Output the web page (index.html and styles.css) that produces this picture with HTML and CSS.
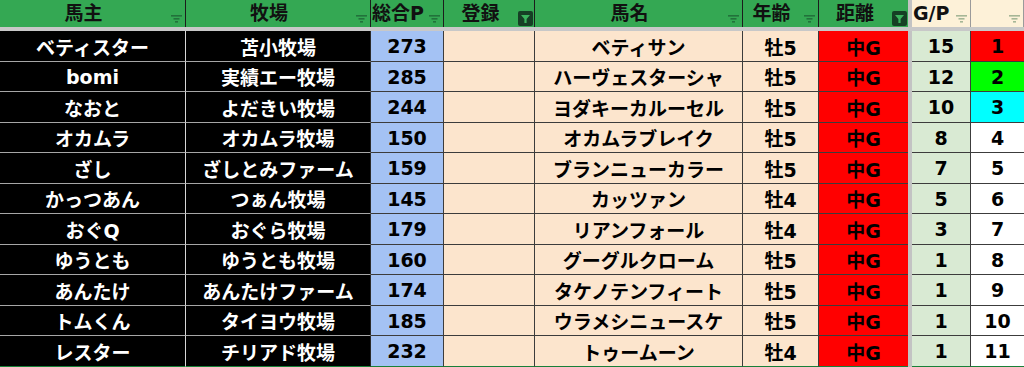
FILE: index.html
```html
<!DOCTYPE html>
<html lang="ja">
<head>
<meta charset="utf-8">
<title>馬主一覧</title>
<link rel="stylesheet" href="styles.css">
</head>
<body>
<div class="sheet">
  <div class="freeze-col"></div>
  <div class="freeze-row"></div>

  <div class="hd"><span class="lbl">馬主</span><span class="fi"><svg width="11" height="8" viewBox="0 0 11 8"><rect x="0" y="0" width="11" height="1.6"/><rect x="2.5" y="3" width="6" height="1.6"/><rect x="4" y="6" width="3" height="1.6"/></svg></span></div>
  <div class="hd"><span class="lbl">牧場</span><span class="fi"><svg width="11" height="8" viewBox="0 0 11 8"><rect x="0" y="0" width="11" height="1.6"/><rect x="2.5" y="3" width="6" height="1.6"/><rect x="4" y="6" width="3" height="1.6"/></svg></span></div>
  <div class="hd"><span class="lbl">総合P</span><span class="fi"><svg width="11" height="8" viewBox="0 0 11 8"><rect x="0" y="0" width="11" height="1.6"/><rect x="2.5" y="3" width="6" height="1.6"/><rect x="4" y="6" width="3" height="1.6"/></svg></span></div>
  <div class="hd"><span class="lbl">登録</span><span class="fa"><svg width="15" height="15" viewBox="0 0 15 15"><rect x="0" y="0" width="15" height="15" rx="2" class="sq"/><path d="M3 4 H12 L8.6 8 V12 H6.4 V8 Z" class="fn"/></svg></span></div>
  <div class="hd"><span class="lbl">馬名</span><span class="fi"><svg width="11" height="8" viewBox="0 0 11 8"><rect x="0" y="0" width="11" height="1.6"/><rect x="2.5" y="3" width="6" height="1.6"/><rect x="4" y="6" width="3" height="1.6"/></svg></span></div>
  <div class="hd"><span class="lbl">年齢</span><span class="fi"><svg width="11" height="8" viewBox="0 0 11 8"><rect x="0" y="0" width="11" height="1.6"/><rect x="2.5" y="3" width="6" height="1.6"/><rect x="4" y="6" width="3" height="1.6"/></svg></span></div>
  <div class="hd hd-last"><span class="lbl">距離</span><span class="fa"><svg width="15" height="15" viewBox="0 0 15 15"><rect x="0" y="0" width="15" height="15" rx="2" class="sq"/><path d="M3 4 H12 L8.6 8 V12 H6.4 V8 Z" class="fn"/></svg></span></div>
  <div class="hd hd-cream hd-left"><span class="lbl">G/P</span><span class="fi"><svg width="11" height="8" viewBox="0 0 11 8"><rect x="0" y="0" width="11" height="1.6"/><rect x="2.5" y="3" width="6" height="1.6"/><rect x="4" y="6" width="3" height="1.6"/></svg></span></div>
  <div class="hd hd-cream"><span class="lbl"></span><span class="fi"><svg width="11" height="8" viewBox="0 0 11 8"><rect x="0" y="0" width="11" height="1.6"/><rect x="2.5" y="3" width="6" height="1.6"/><rect x="4" y="6" width="3" height="1.6"/></svg></span></div>

  <div class="c owner">ベティスター</div><div class="c farm">苫小牧場</div><div class="c pts">273</div><div class="c reg"></div><div class="c name">ベティサン</div><div class="c age">牡5</div><div class="c dist">中G</div><div class="c gp">15</div><div class="c rank r1">1</div>
  <div class="c owner">bomi</div><div class="c farm">実績エー牧場</div><div class="c pts">285</div><div class="c reg"></div><div class="c name">ハーヴェスターシャ</div><div class="c age">牡5</div><div class="c dist">中G</div><div class="c gp">12</div><div class="c rank r2">2</div>
  <div class="c owner">なおと</div><div class="c farm">よだきい牧場</div><div class="c pts">244</div><div class="c reg"></div><div class="c name">ヨダキーカルーセル</div><div class="c age">牡5</div><div class="c dist">中G</div><div class="c gp">10</div><div class="c rank r3">3</div>
  <div class="c owner">オカムラ</div><div class="c farm">オカムラ牧場</div><div class="c pts">150</div><div class="c reg"></div><div class="c name">オカムラブレイク</div><div class="c age">牡5</div><div class="c dist">中G</div><div class="c gp">8</div><div class="c rank">4</div>
  <div class="c owner">ざし</div><div class="c farm">ざしとみファーム</div><div class="c pts">159</div><div class="c reg"></div><div class="c name">ブランニューカラー</div><div class="c age">牡5</div><div class="c dist">中G</div><div class="c gp">7</div><div class="c rank">5</div>
  <div class="c owner">かっつあん</div><div class="c farm">つぁん牧場</div><div class="c pts">145</div><div class="c reg"></div><div class="c name">カッツァン</div><div class="c age">牡4</div><div class="c dist">中G</div><div class="c gp">5</div><div class="c rank">6</div>
  <div class="c owner">おぐQ</div><div class="c farm">おぐら牧場</div><div class="c pts">179</div><div class="c reg"></div><div class="c name">リアンフォール</div><div class="c age">牡4</div><div class="c dist">中G</div><div class="c gp">3</div><div class="c rank">7</div>
  <div class="c owner">ゆうとも</div><div class="c farm">ゆうとも牧場</div><div class="c pts">160</div><div class="c reg"></div><div class="c name">グーグルクローム</div><div class="c age">牡5</div><div class="c dist">中G</div><div class="c gp">1</div><div class="c rank">8</div>
  <div class="c owner">あんたけ</div><div class="c farm">あんたけファーム</div><div class="c pts">174</div><div class="c reg"></div><div class="c name">タケノテンフィート</div><div class="c age">牡5</div><div class="c dist">中G</div><div class="c gp">1</div><div class="c rank">9</div>
  <div class="c owner">トムくん</div><div class="c farm">タイヨウ牧場</div><div class="c pts">185</div><div class="c reg"></div><div class="c name">ウラメシニュースケ</div><div class="c age">牡5</div><div class="c dist">中G</div><div class="c gp">1</div><div class="c rank">10</div>
  <div class="c owner last">レスター</div><div class="c farm last">チリアド牧場</div><div class="c pts last">232</div><div class="c reg last"></div><div class="c name last">トゥームーン</div><div class="c age last">牡4</div><div class="c dist last">中G</div><div class="c gp last">1</div><div class="c rank last">11</div>
</div>
</body>
</html>
```

FILE: styles.css
```css
html, body {
  margin: 0;
  padding: 0;
  background: #ffffff;
  overflow: hidden;
}

.sheet {
  display: grid;
  grid-template-columns: 186px 185px 73px 91px 208px 76px 89px 4px 59px 53px;
  grid-template-rows: 27px 4px 31px 30px 31px 30px 31px 30px 31px 30px 31px 30px 31px;
  width: 1024px;
  height: 367px;
  font-family: "DejaVu Sans", "Noto Sans CJK JP", sans-serif;
  font-weight: bold;
  font-size: 19px;
}

.freeze-col {
  grid-column: 8;
  grid-row: 1 / -1;
  background: #c3c3c3;
}

.freeze-row {
  grid-column: 1 / -1;
  grid-row: 2;
  background: #c8c8c8;
}

/* header */
.hd {
  box-sizing: border-box;
  display: flex;
  align-items: center;
  background: #34a853;
  color: #111111;
  border-right: 1px solid #1c1c1c;
  min-width: 0;
}

.hd-last {
  border-right: none;
}

.hd-cream {
  background: #fdf1d8;
  border-right: 1px solid #9a9a9a;
}

.lbl {
  flex: 1;
  text-align: center;
  white-space: nowrap;
  line-height: 27px;
}

.hd-left .lbl {
  text-align: left;
  padding-left: 1px;
}

.fi {
  width: 18px;
  align-self: flex-end;
  display: flex;
  justify-content: flex-end;
  padding-right: 3px;
  margin-bottom: 4px;
  box-sizing: border-box;
}

.fi svg {
  display: block;
  fill: rgba(20, 70, 40, 0.55);
}

.hd-cream .fi svg {
  fill: rgba(60, 110, 70, 0.45);
}

.fa {
  width: 17px;
  align-self: flex-end;
  display: flex;
  justify-content: flex-end;
  padding-right: 1px;
  margin-bottom: 1px;
  box-sizing: border-box;
}

.fa svg {
  display: block;
}

.fa .sq {
  fill: #163f25;
}

.fa .fn {
  fill: #3bb35d;
}

/* body cells */
.c {
  box-sizing: border-box;
  display: flex;
  align-items: center;
  justify-content: center;
  white-space: nowrap;
  color: #000000;
  border-right: 1px solid #3c3c3c;
  border-bottom: 1px solid #3c3c3c;
  min-width: 0;
}

.owner {
  background: #000000;
  color: #ffffff;
  border-right: 1px solid #d6d6d6;
  border-bottom: 1px solid #a6a6a6;
}

.farm {
  background: #000000;
  color: #ffffff;
  border-right: 1px solid #2a2a2a;
  border-bottom: 1px solid #a6a6a6;
}

.pts {
  background: #a4c2f4;
}

.reg,
.name,
.age {
  background: #fce5cd;
}

.dist {
  background: #ff0000;
  border-right: none;
}

.gp {
  background: #d9ead3;
}

.rank {
  background: #ffffff;
  border-right: none;
}

.r1 {
  background: #ff0000;
}

.r2 {
  background: #00ff00;
}

.r3 {
  background: #00ffff;
}

.last {
  border-bottom: 1px solid #188038;
}
```
